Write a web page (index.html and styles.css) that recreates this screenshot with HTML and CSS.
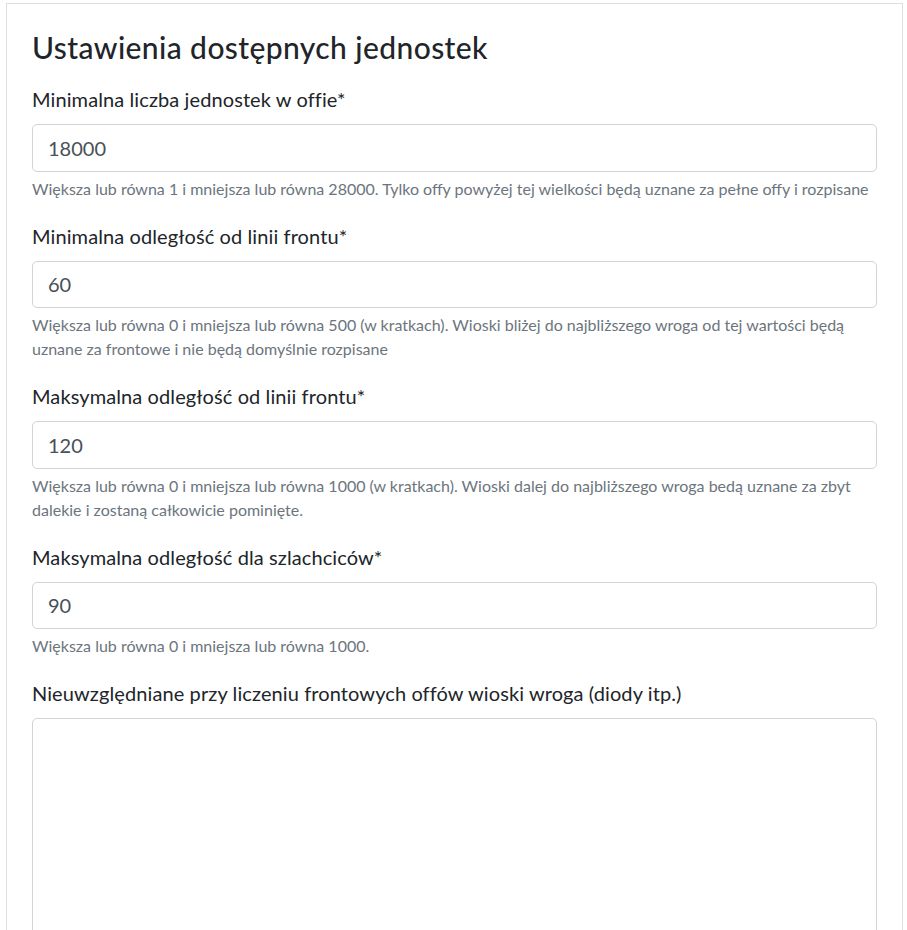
FILE: index.html
```html
<!DOCTYPE html>
<html lang="pl">
<head>
<meta charset="utf-8">
<title>Ustawienia dostępnych jednostek</title>
<link rel="stylesheet" href="styles.css">
</head>
<body>
<div class="page">
  <div class="card">
    <div class="card-body">
      <h3 class="title">Ustawienia dostępnych jednostek</h3>
      <div class="form-group">
        <label class="label" for="f1">Minimalna liczba jednostek w offie*</label>
        <input class="input" id="f1" type="text" value="18000">
        <small class="help">Większa lub równa 1 i mniejsza lub równa 28000. Tylko offy powyżej tej wielkości będą uznane za pełne offy i rozpisane</small>
      </div>
      <div class="form-group">
        <label class="label" for="f2">Minimalna odległość od linii frontu*</label>
        <input class="input" id="f2" type="text" value="60">
        <small class="help">Większa lub równa 0 i mniejsza lub równa 500 (w kratkach). Wioski bliżej do najbliższego wroga od tej wartości będą uznane za frontowe i nie będą domyślnie rozpisane</small>
      </div>
      <div class="form-group">
        <label class="label" for="f3">Maksymalna odległość od linii frontu*</label>
        <input class="input" id="f3" type="text" value="120">
        <small class="help">Większa lub równa 0 i mniejsza lub równa 1000 (w kratkach). Wioski dalej do najbliższego wroga bedą uznane za zbyt dalekie i zostaną całkowicie pominięte.</small>
      </div>
      <div class="form-group">
        <label class="label" for="f4">Maksymalna odległość dla szlachciców*</label>
        <input class="input" id="f4" type="text" value="90">
        <small class="help">Większa lub równa 0 i mniejsza lub równa 1000.</small>
      </div>
      <div class="form-group">
        <label class="label" for="f5">Nieuwzględniane przy liczeniu frontowych offów wioski wroga (diody itp.)</label>
        <textarea class="input textarea" id="f5"></textarea>
      </div>
    </div>
  </div>
</div>
</body>
</html>
```

FILE: styles.css
```css
html {
  overflow: hidden;
}

body {
  margin: 0;
  background: #fff;
  font-family: "Lato", "Open Sans", sans-serif;
  color: #212529;
}

.page {
  padding: 3px 4px 0 6px;
}

.card {
  border: 1px solid #dfdfdf;
  border-bottom: none;
  background: #fff;
}

.card-body {
  padding: 25px 25px 0 25px;
}

.title {
  margin: 0 0 19px 0;
  font-size: 30px;
  font-weight: 500;
  line-height: 36px;
  letter-spacing: 0.4px;
  color: #212529;
}

.form-group {
  margin-bottom: 20px;
}

.label {
  display: block;
  margin-bottom: 10px;
  font-size: 20px;
  line-height: 30px;
  letter-spacing: 0.1px;
  color: #212529;
}

.input {
  display: block;
  box-sizing: border-box;
  width: 100%;
  height: 47.5px;
  margin: 0;
  padding: 7px 15px;
  font-family: inherit;
  font-size: 20px;
  line-height: 30px;
  color: #495057;
  background: #fff;
  border: 1px solid #ced4da;
  border-radius: 5px;
  outline: none;
}

.textarea {
  height: 320px;
  resize: vertical;
}

.help {
  display: block;
  margin-top: 5px;
  font-size: 16px;
  line-height: 24px;
  color: #6c757d;
}
```
